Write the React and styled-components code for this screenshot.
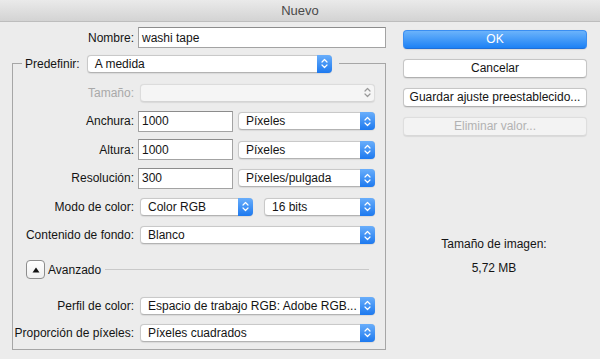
import React from 'react';
import styled, { createGlobalStyle } from 'styled-components';

const GlobalStyle = createGlobalStyle`
  html, body {
    margin: 0;
    padding: 0;
    background: #ececec;
  }
  body {
    font-family: "Liberation Sans", Arial, sans-serif;
    font-size: 12px;
    color: #141414;
  }
`

const Window = styled.div`
  width: 600px;
  height: 359px;
  overflow: hidden;
  background: #ececec;
  display: flex;
  flex-direction: column;
`

const TitleBar = styled.div`
  height: 21px;
  flex: none;
  display: flex;
  align-items: center;
  justify-content: center;
  background: linear-gradient(#eaeaea, #d3d3d3);
  border-bottom: 1px solid #bdbdbd;
  font-size: 13px;
  color: #4a4a4a;
`

const Body = styled.div`
  display: flex;
  gap: 17px;
  padding-top: 5px;
`

const LeftCol = styled.div`
  width: 374px;
  padding-left: 12px;
  display: flex;
  flex-direction: column;
`

const RightCol = styled.div`
  width: 184px;
  padding-top: 2.5px;
  display: flex;
  flex-direction: column;
  gap: 10px;
`

const Row = styled.div`
  display: flex;
  align-items: center;
  height: 21px;
  padding-left: ${p => p.$indent ?? 0}px;
  padding-right: ${p => p.$right ?? 8}px;
`

const Label = styled.div`
  width: 121px;
  margin-right: 4px;
  text-align: right;
  white-space: nowrap;
  color: ${p => (p.$disabled ? '#a9a9a9' : '#141414')};
`

const Input = styled.div`
  box-sizing: border-box;
  width: ${p => (p.$width ? `${p.$width}px` : 'auto')};
  flex: ${p => (p.$width ? 'none' : '1')};
  height: 21px;
  background: #fff;
  border: 1px solid #a3a3a3;
  border-top-color: #8c8c8c;
  padding-left: 3px;
  display: flex;
  align-items: center;
`

const Select = styled.div`
  box-sizing: border-box;
  width: ${p => (p.$width ? `${p.$width}px` : 'auto')};
  flex: ${p => (p.$width ? 'none' : '1')};
  height: 18px;
  margin: 0 2px 0 ${p => p.$ml ?? 2}px;
  display: flex;
  align-items: stretch;
  background: ${p => (p.$disabled ? '#f5f5f5' : '#fff')};
  border: 1px solid ${p => (p.$disabled ? '#dcdcdc' : '#c9c9c9')};
  border-bottom-color: ${p => (p.$disabled ? '#d4d4d4' : '#b3b3b3')};
  border-radius: 4px;
  box-shadow: 0 0.5px 1px rgba(0, 0, 0, 0.08);
`

const SelectValue = styled.div`
  flex: 1;
  padding-left: 7px;
  display: flex;
  align-items: center;
  white-space: nowrap;
  overflow: hidden;
`

const Stepper = styled.div`
  width: 15px;
  margin: -1px -1px -1px 0;
  display: flex;
  align-items: center;
  justify-content: center;
  border-radius: 0 4px 4px 0;
  background: ${p => (p.$disabled ? 'transparent' : 'linear-gradient(#69aefb, #1d79ef)')};
`

const Group = styled.fieldset`
  margin: 7px 0 0 0;
  padding: 10px 0 6px 0;
  border: 1px solid #a6a6a6;
  min-width: 0;
`

const Legend = styled.legend`
  margin-left: 9px;
  padding: 0 5px 0 3px;
  display: flex;
  align-items: center;
  height: 17px;
`

const LegendLabel = styled.span`
  margin-right: 5px;
`

const FieldList = styled.div`
  display: flex;
  flex-direction: column;
  gap: ${p => p.$gap}px;
  margin-top: ${p => p.$mt || 0}px;
`

const AdvancedRow = styled.div`
  display: flex;
  align-items: center;
  height: 20px;
  margin-top: 14px;
  padding: 0 16px 0 13px;
`

const Disclosure = styled.div`
  box-sizing: border-box;
  width: 19px;
  height: 19px;
  border: 1px solid #8d8d8d;
  border-radius: 4px;
  background: linear-gradient(#ffffff, #efefef);
  display: flex;
  align-items: center;
  justify-content: center;
  margin-right: 3px;
`

const AdvancedLine = styled.div`
  flex: 1;
  height: 1px;
  margin-left: 4px;
  background: #c9c9c9;
`

const Button = styled.div`
  box-sizing: border-box;
  height: 19px;
  border-radius: 4px;
  display: flex;
  align-items: center;
  justify-content: center;
  white-space: nowrap;
  background: ${p => (p.$primary ? 'linear-gradient(#6bb3fb, #1c81f5)' : p.$disabled ? '#f3f3f3' : '#fff')};
  border: 1px solid ${p => (p.$primary ? '#3a8ef2' : p.$disabled ? '#dedede' : '#c6c6c6')};
  border-bottom-color: ${p => (p.$primary ? '#1f6fd8' : p.$disabled ? '#d8d8d8' : '#b0b0b0')};
  color: ${p => (p.$primary ? '#fff' : p.$disabled ? '#b2b2b2' : '#141414')};
  box-shadow: 0 0.5px 1px rgba(0, 0, 0, 0.08);
`

const SizeInfo = styled.div`
  margin-top: 91px;
  display: flex;
  flex-direction: column;
  align-items: center;
  gap: 9px;
  line-height: 15px;
  padding-right: 2px;
`

function Chevrons({ disabled }) {
  const c = disabled ? '#9a9a9a' : '#fff';
  return (
    <svg width="7" height="11" viewBox="0 0 7 11">
      <path d="M1 4 L3.5 1.5 L6 4 M1 7 L3.5 9.5 L6 7" fill="none" stroke={c} strokeWidth="1.2" strokeLinecap="round" strokeLinejoin="round" />
    </svg>
  );
}

function PopUp({ value, width, ml, disabled }) {
  return (
    <Select $width={width} $ml={ml} $disabled={disabled}>
      <SelectValue>{value}</SelectValue>
      <Stepper $disabled={disabled}>
        <Chevrons disabled={disabled} />
      </Stepper>
    </Select>
  );
}

export default function App() {
  return (
    <>
      <GlobalStyle />
      <Window>
        <TitleBar>Nuevo</TitleBar>
        <Body>
          <LeftCol>
            <Row $indent={1} $right={0}>
              <Label>Nombre:</Label>
              <Input>washi tape</Input>
            </Row>
            <Group>
              <Legend>
                <LegendLabel>Predefinir:</LegendLabel>
                <PopUp value="A medida" width={245} />
              </Legend>
              <FieldList $gap={7.5}>
                <Row>
                  <Label $disabled>Tamaño:</Label>
                  <PopUp value="" disabled />
                </Row>
                <Row>
                  <Label>Anchura:</Label>
                  <Input $width={95}>1000</Input>
                  <PopUp value="Píxeles" ml={5} />
                </Row>
                <Row>
                  <Label>Altura:</Label>
                  <Input $width={95}>1000</Input>
                  <PopUp value="Píxeles" ml={5} />
                </Row>
                <Row>
                  <Label>Resolución:</Label>
                  <Input $width={95}>300</Input>
                  <PopUp value="Píxeles/pulgada" ml={5} />
                </Row>
                <Row>
                  <Label>Modo de color:</Label>
                  <PopUp value="Color RGB" width={113} />
                  <PopUp value="16 bits" ml={9} />
                </Row>
                <Row>
                  <Label>Contenido de fondo:</Label>
                  <PopUp value="Blanco" />
                </Row>
              </FieldList>
              <AdvancedRow>
                <Disclosure>
                  <svg width="8" height="6" viewBox="0 0 8 6">
                    <path d="M4 0.5 L7.5 5.5 L0.5 5.5 Z" fill="#111" />
                  </svg>
                </Disclosure>
                Avanzado
                <AdvancedLine />
              </AdvancedRow>
              <FieldList $gap={6} $mt={15.5}>
                <Row>
                  <Label>Perfil de color:</Label>
                  <PopUp value="Espacio de trabajo RGB: Adobe RGB..." />
                </Row>
                <Row>
                  <Label>Proporción de píxeles:</Label>
                  <PopUp value="Píxeles cuadrados" />
                </Row>
              </FieldList>
            </Group>
          </LeftCol>
          <RightCol>
            <Button $primary>OK</Button>
            <Button>Cancelar</Button>
            <Button>Guardar ajuste preestablecido...</Button>
            <Button $disabled>Eliminar valor...</Button>
            <SizeInfo>
              <div>Tamaño de imagen:</div>
              <div>5,72 MB</div>
            </SizeInfo>
          </RightCol>
        </Body>
      </Window>
    </>
  );
}
